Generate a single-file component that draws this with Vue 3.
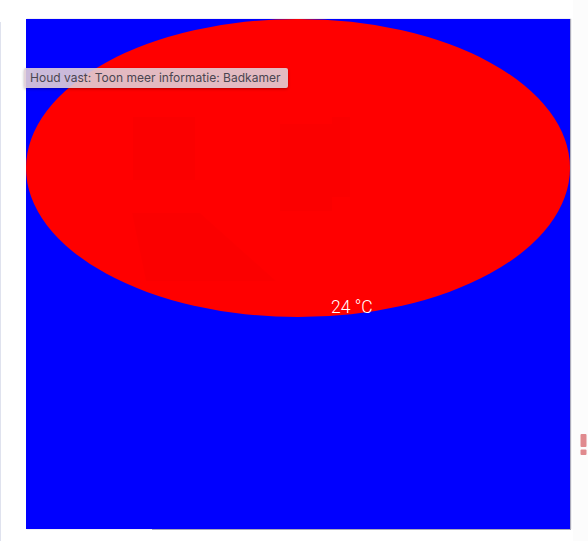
<script setup>
const tooltip = 'Houd vast: Toon meer informatie: Badkamer';
const temperature = '24 °C';
</script>

<template>
  <div class="page">
    <div class="panel">
      <div class="room">
        <!-- vage plattegrond onder de kleur -->
        <svg class="plan" viewBox="0 0 544 298" width="544" height="298">
          <rect x="107" y="98" width="62" height="63" />
          <path d="M254 105h52v-7h18v80h-18v14h-52z" />
          <path d="M106 194h68l76 68h-130z" />
        </svg>
        <span class="temp">{{ temperature }}</span>
      </div>
      <div class="panel-edge"></div>
    </div>
    <div class="tooltip">{{ tooltip }}</div>
    <svg class="alert" viewBox="0 0 7 21" width="7" height="21">
      <rect x="0.5" y="0" width="6" height="13" rx="1" />
      <rect x="0.5" y="15.5" width="6" height="5.5" rx="1" />
    </svg>
  </div>
</template>

<style scoped>
.page {
  position: relative;
  width: 588px;
  height: 541px;
  box-sizing: border-box;
  padding: 19px 18px 12px 26px;
  overflow: hidden;
  background: linear-gradient(to right, #fff 573px, #fcfcfc 573px);
  font-family: "Liberation Sans", Arial, sans-serif;
}

/* dunne lijn van de kaart ernaast */
.page::before {
  content: '';
  position: absolute;
  left: 0;
  top: 22px;
  bottom: 0;
  width: 1px;
  background: #dfe2ee;
}

.panel {
  position: relative;
  height: 510px;
  background: #0000ff;
  box-shadow: 1px 0 1px rgba(90, 90, 120, 0.5);
}

.panel-edge {
  position: absolute;
  left: 126px;
  right: -1px;
  bottom: -1px;
  height: 1px;
  background: #a9a9b8;
}

.room {
  position: relative;
  height: 298px;
  border-radius: 50%;
  background: #ff0000;
}

.plan {
  position: absolute;
  left: 0;
  top: 0;
  fill: rgba(0, 0, 0, 0.015);
}

.temp {
  position: absolute;
  left: 305px;
  top: 278px;
  font-family: Roboto, sans-serif;
  font-weight: 300;
  font-size: 17.5px;
  line-height: 20px;
  color: #fff;
  white-space: nowrap;
}

.tooltip {
  position: absolute;
  left: 24px;
  top: 68px;
  width: 264px;
  height: 20px;
  box-sizing: border-box;
  padding: 0 6px;
  border-radius: 2px;
  background: rgba(224, 206, 214, 0.9);
  box-shadow: 0 1px 3px rgba(0, 0, 0, 0.3);
  color: #4a4550;
  font-family: Inter, sans-serif;
  font-size: 12px;
  letter-spacing: 0.02px;
  line-height: 20px;
  white-space: nowrap;
}

.alert {
  position: absolute;
  left: 580px;
  top: 434px;
  fill: #e08a8e;
}
</style>
